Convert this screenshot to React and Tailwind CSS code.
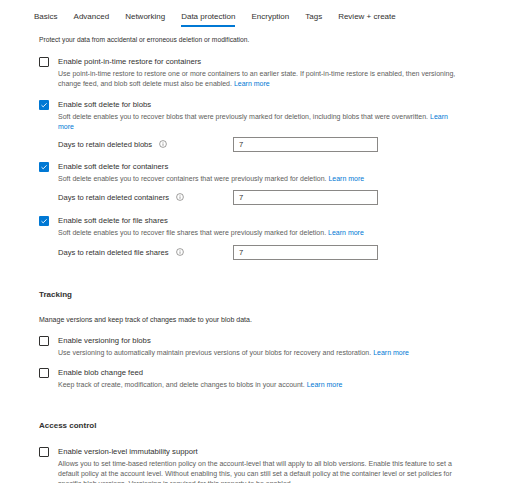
import React from "react";

const font = { fontFamily: '"Segoe UI", "Liberation Sans", Arial, sans-serif' };

function Box({ checked }) {
  if (checked) {
    return (
      <div className="w-[10px] h-[10px] shrink-0 bg-[#0078d4] flex items-center justify-center rounded-[1px]">
        <svg width="8" height="8" viewBox="0 0 8 8">
          <path d="M1.5 4.2 L3.2 5.8 L6.6 2.3" stroke="white" strokeWidth="0.9" fill="none" />
        </svg>
      </div>
    );
  }
  return <div className="w-[10px] h-[10px] shrink-0 border border-[#323130] rounded-[1px] bg-white" />;
}

function Link({ children }) {
  return <span className="text-[#0078d4]">{children}</span>;
}

function Check({ checked, label, lines, className = "" }) {
  return (
    <div className={"flex gap-[9px] " + className}>
      <Box checked={checked} />
      <div className="flex flex-col">
        <div className="text-[7.7px] leading-[10px] text-[#323130] whitespace-nowrap">{label}</div>
        <div className="mt-[2px] flex flex-col text-[7px] leading-[10px] text-[#605e5c] whitespace-nowrap">
          {lines.map((l, i) => (
            <div key={i}>{l}</div>
          ))}
        </div>
      </div>
    </div>
  );
}

function Days({ label, className = "" }) {
  return (
    <div className={"flex items-center pl-[19px] " + className}>
      <div className="w-[175px] flex items-center gap-[7px] text-[7.6px] text-[#323130] whitespace-nowrap">
        <span>{label}</span>
        <svg width="8" height="8" viewBox="0 0 8 8">
          <circle cx="4" cy="4" r="3.4" stroke="#605e5c" strokeWidth="0.6" fill="none" />
          <rect x="3.7" y="3.4" width="0.6" height="2.4" fill="#605e5c" />
          <rect x="3.7" y="2.2" width="0.6" height="0.6" fill="#605e5c" />
        </svg>
      </div>
      <div className="w-[145px] h-[15px] border border-[#8a8886] flex items-center pl-[5px] text-[7.6px] text-[#323130]">
        7
      </div>
    </div>
  );
}

export default function App() {
  const tabs = ["Basics", "Advanced", "Networking", "Data protection", "Encryption", "Tags", "Review + create"];
  return (
    <div className="w-[532px] h-[483px] overflow-hidden bg-white" style={font}>
      <div className="flex gap-[16px] pl-[34px] h-[27px]">
        {tabs.map((t) => (
          <div
            key={t}
            className={
              "pt-[12px] pb-[3px] text-[8px] leading-[10px] text-[#323130] border-b-2 " +
              (t === "Data protection" ? "border-[#0078d4]" : "border-transparent")
            }
          >
            {t}
          </div>
        ))}
      </div>
      <div className="pl-[39px] flex flex-col">
        <div className="mt-[8px] text-[6.7px] leading-[10px] text-[#323130]">
          Protect your data from accidental or erroneous deletion or modification.
        </div>
        <Check
          className="mt-[12px]"
          label="Enable point-in-time restore for containers"
          lines={[
            "Use point-in-time restore to restore one or more containers to an earlier state. If point-in-time restore is enabled, then versioning,",
            <>change feed, and blob soft delete must also be enabled. <Link>Learn more</Link></>,
          ]}
        />
        <Check
          className="mt-[11px]"
          checked
          label="Enable soft delete for blobs"
          lines={[
            <>Soft delete enables you to recover blobs that were previously marked for deletion, including blobs that were overwritten. <Link>Learn</Link></>,
            <Link>more</Link>,
          ]}
        />
        <Days className="mt-[5px]" label="Days to retain deleted blobs" />
        <Check
          className="mt-[10px]"
          checked
          label="Enable soft delete for containers"
          lines={[<>Soft delete enables you to recover containers that were previously marked for deletion. <Link>Learn more</Link></>]}
        />
        <Days className="mt-[6px]" label="Days to retain deleted containers" />
        <Check
          className="mt-[11px]"
          checked
          label="Enable soft delete for file shares"
          lines={[<>Soft delete enables you to recover file shares that were previously marked for deletion. <Link>Learn more</Link></>]}
        />
        <Days className="mt-[7px]" label="Days to retain deleted file shares" />
        <div className="mt-[29px] text-[8px] leading-[12px] font-bold text-[#323130]">Tracking</div>
        <div className="mt-[14px] text-[7px] leading-[10px] text-[#323130]">
          Manage versions and keep track of changes made to your blob data.
        </div>
        <Check
          className="mt-[11px]"
          label="Enable versioning for blobs"
          lines={[<>Use versioning to automatically maintain previous versions of your blobs for recovery and restoration. <Link>Learn more</Link></>]}
        />
        <Check
          className="mt-[10px]"
          label="Enable blob change feed"
          lines={[<>Keep track of create, modification, and delete changes to blobs in your account. <Link>Learn more</Link></>]}
        />
        <div className="mt-[30px] text-[8px] leading-[12px] font-bold text-[#323130]">Access control</div>
        <Check
          className="mt-[15px]"
          label="Enable version-level immutability support"
          lines={[
            "Allows you to set time-based retention policy on the account-level that will apply to all blob versions. Enable this feature to set a",
            "default policy at the account level. Without enabling this, you can still set a default policy at the container level or set policies for",
            "specific blob versions. Versioning is required for this property to be enabled.",
          ]}
        />
      </div>
    </div>
  );
}
